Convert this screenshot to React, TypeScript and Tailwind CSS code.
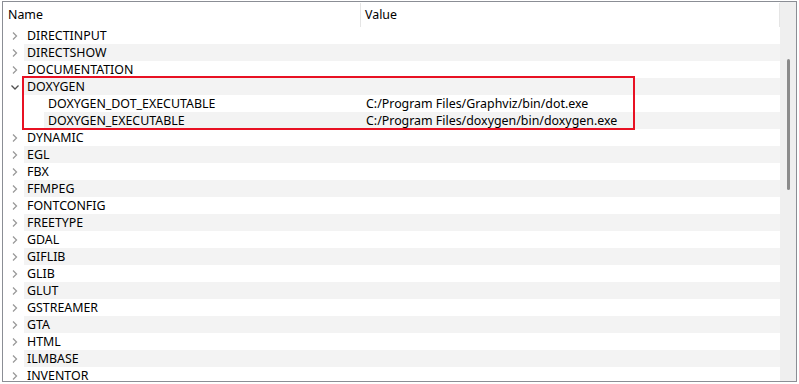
import React from 'react'

type Row = { name: string; value?: string; level: 0 | 1; open?: boolean }

const rows: Row[] = [
  { name: 'DIRECTINPUT', level: 0 },
  { name: 'DIRECTSHOW', level: 0 },
  { name: 'DOCUMENTATION', level: 0 },
  { name: 'DOXYGEN', level: 0, open: true },
  { name: 'DOXYGEN_DOT_EXECUTABLE', value: 'C:/Program Files/Graphviz/bin/dot.exe', level: 1 },
  { name: 'DOXYGEN_EXECUTABLE', value: 'C:/Program Files/doxygen/bin/doxygen.exe', level: 1 },
  { name: 'DYNAMIC', level: 0 },
  { name: 'EGL', level: 0 },
  { name: 'FBX', level: 0 },
  { name: 'FFMPEG', level: 0 },
  { name: 'FONTCONFIG', level: 0 },
  { name: 'FREETYPE', level: 0 },
  { name: 'GDAL', level: 0 },
  { name: 'GIFLIB', level: 0 },
  { name: 'GLIB', level: 0 },
  { name: 'GLUT', level: 0 },
  { name: 'GSTREAMER', level: 0 },
  { name: 'GTA', level: 0 },
  { name: 'HTML', level: 0 },
  { name: 'ILMBASE', level: 0 },
  { name: 'INVENTOR', level: 0 },
]

function Chevron({ open }: { open?: boolean }) {
  if (open) {
    return (
      <svg width="10" height="8" viewBox="0 0 10 8" className="block">
        <path d="M1.5 2.5 L5 6 L8.5 2.5" fill="none" stroke="#505050" strokeWidth="1.3" />
      </svg>
    )
  }
  return (
    <svg width="8" height="10" viewBox="0 0 8 10" className="block">
      <path d="M2 1.5 L5.5 5 L2 8.5" fill="none" stroke="#9a9a9a" strokeWidth="1.3" />
    </svg>
  )
}

export default function App() {
  return (
    <div className="relative w-[799px] h-[384px] bg-white pl-[2px] pt-[1px] overflow-hidden" style={{ fontFamily: '"Noto Sans", "Open Sans", sans-serif' }}>
      <div className="flex w-[795px] h-[381px] border border-[#8b8e95] text-[12.4px] text-black">
        {/* tree */}
        <div className="flex-1 flex flex-col overflow-hidden">
          {/* header */}
          <div className="flex h-[25px] shrink-0 items-start pt-[1px]">
            <div className="w-[358px] h-[24px] flex items-center pl-[5px] border-r border-[#e5e5e5]">Name</div>
            <div className="flex-1 h-[24px] flex items-center pl-[4px] border-r border-[#e5e5e5]">Value</div>
          </div>

          {rows.map((r, i) => (
            <div key={r.name} className="flex h-[17px] shrink-0 items-center">
              <div className={r.level === 0 ? 'w-[21px] shrink-0 flex justify-center pl-[3px]' : 'w-[41px] shrink-0'}>
                {r.level === 0 && <Chevron open={r.open} />}
              </div>
              <div className={`flex-1 h-full flex items-center ${i % 2 === 1 ? 'bg-[#f3f3f3]' : ''}`}>
                <div className={r.level === 0 ? 'w-[337px] pl-[3px] leading-[17px] whitespace-nowrap' : 'w-[317px] pl-[4px] leading-[17px] whitespace-nowrap'}>
                  {r.name}
                </div>
                <div className="flex-1 pl-[5px] leading-[17px] whitespace-nowrap">{r.value}</div>
              </div>
            </div>
          ))}
        </div>

        {/* scrollbar */}
        <div className="w-[16px] shrink-0 bg-[#efefef] pt-[57px] pl-[7px]">
          <div className="w-[3px] h-[131px] bg-[#8a8a8a] rounded-full" />
        </div>
      </div>

      {/* annotation */}
      <div className="absolute left-[22px] top-[76px] w-[613px] h-[54px] border-2 border-[#e81123]" />
    </div>
  )
}
